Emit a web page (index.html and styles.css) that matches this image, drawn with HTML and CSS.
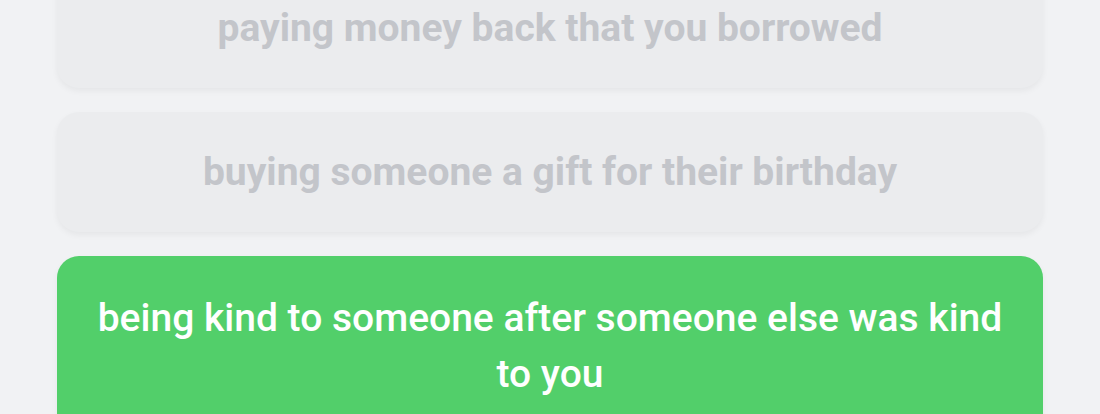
FILE: index.html
```html
<!DOCTYPE html>
<html lang="en">
<head>
<meta charset="utf-8">
<title>Quiz</title>
<link rel="stylesheet" href="styles.css">
</head>
<body>
<main class="page">
  <div class="options">
    <button class="option">paying money back that you borrowed</button>
    <button class="option">buying someone a gift for their birthday</button>
    <button class="option option--correct">being kind to someone after someone else was kind to you</button>
  </div>
</main>
</body>
</html>
```
FILE: styles.css
```css
* { box-sizing: border-box; }
html, body { margin: 0; padding: 0; }
body {
  background: #f1f2f4;
  font-family: Roboto, "Noto Sans", sans-serif;
  height: 414px;
  overflow: hidden;
}
.page {
  display: flex;
  justify-content: center;
}
.options {
  width: 986px;
  margin-top: -32px;
  display: flex;
  flex-direction: column;
  gap: 24px;
}
.option {
  display: block;
  width: 100%;
  border: none;
  border-radius: 22px;
  background: #ebecee;
  color: #c3c5ca;
  font-family: inherit;
  font-size: 39px;
  font-weight: 700;
  line-height: 56px;
  padding: 32px 32px;
  text-align: center;
  box-shadow: 0 3px 6px rgba(0, 0, 0, 0.05);
}
.option--correct {
  background: #52cf6a;
  color: #ffffff;
  font-weight: 500;
  padding: 34px 32px;
}
```
